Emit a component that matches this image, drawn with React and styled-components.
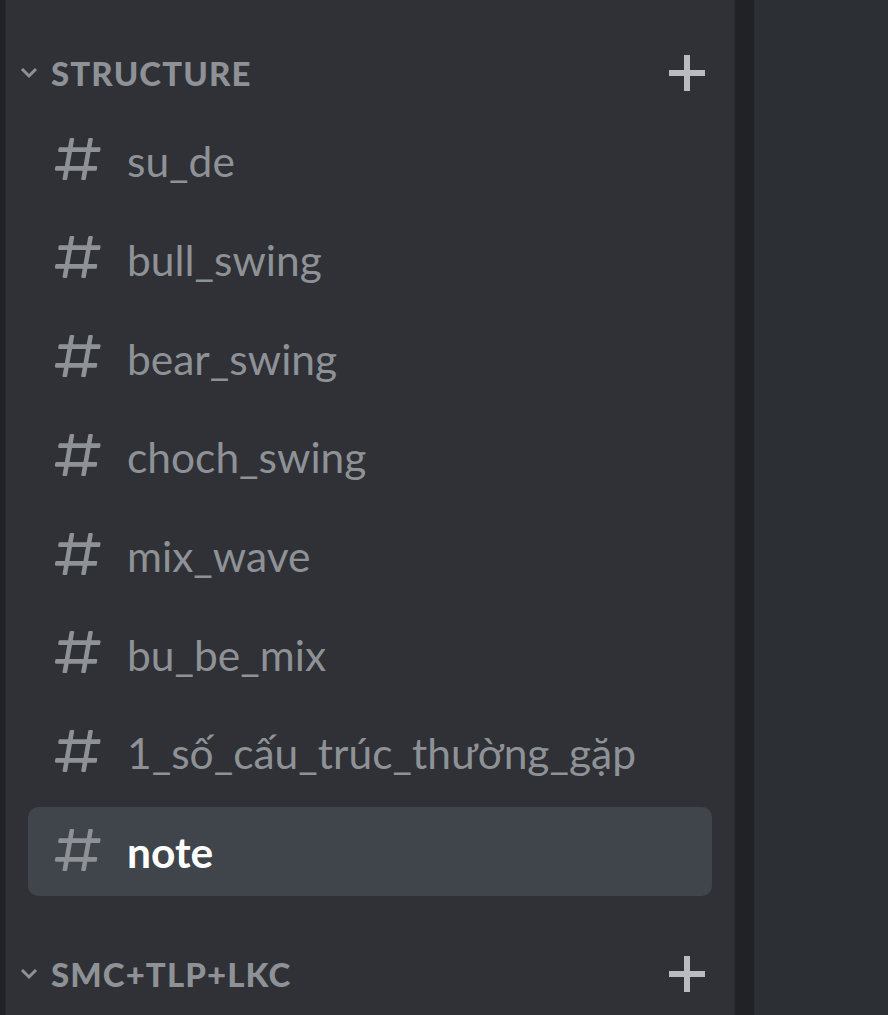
import React from "react";
import styled, { createGlobalStyle } from "styled-components";

const GlobalStyle = createGlobalStyle`
  html, body {
    margin: 0;
    padding: 0;
    background: #2c2f33;
    overflow: hidden;
  }
  #root {
    height: 1015px;
  }
`;

const channels = [
  "su_de",
  "bull_swing",
  "bear_swing",
  "choch_swing",
  "mix_wave",
  "bu_be_mix",
  "1_số_cấu_trúc_thường_gặp",
  "note",
];

const HashIcon = () => (
  <svg width="56" height="56" viewBox="0 0 24 24">
    <path
      fill="currentColor"
      fillRule="evenodd"
      d="M5.88657 21C5.57547 21 5.3399 20.7189 5.39427 20.4126L6.00001 17H2.59511C2.28449 17 2.04905 16.7198 2.10259 16.4138L2.27759 15.4138C2.31946 15.1746 2.52722 15 2.77011 15H6.35001L7.41001 9H4.00511C3.69449 9 3.45905 8.71977 3.51259 8.41381L3.68759 7.41381C3.72946 7.17456 3.93722 7 4.18011 7H7.76001L8.39677 3.41262C8.43914 3.17391 8.64664 3 8.88907 3H9.87344C10.1845 3 10.4201 3.28107 10.3657 3.58738L9.76001 7H15.76L16.3968 3.41262C16.4391 3.17391 16.6466 3 16.8891 3H17.8734C18.1845 3 18.4201 3.28107 18.3657 3.58738L17.76 7H21.1649C21.4755 7 21.711 7.28023 21.6574 7.58619L21.4824 8.58619C21.4406 8.82544 21.2328 9 20.9899 9H17.41L16.35 15H19.7549C20.0655 15 20.301 15.2802 20.2474 15.5862L20.0724 16.5862C20.0306 16.8254 19.8228 17 19.5799 17H16L15.3632 20.5874C15.3209 20.8261 15.1134 21 14.8709 21H13.8866C13.5755 21 13.3399 20.7189 13.3943 20.4126L14 17H8.00001L7.36325 20.5874C7.32088 20.8261 7.11337 21 6.87094 21H5.88657ZM9.41045 9L8.35045 15H14.3504L15.4104 9H9.41045Z"
    />
  </svg>
);

const Chevron = () => (
  <svg width="18" height="12" viewBox="0 0 18 12">
    <polyline
      points="2,2 9,9 16,2"
      fill="none"
      stroke="currentColor"
      strokeWidth="3"
    />
  </svg>
);

const PlusIcon = () => (
  <svg width="36" height="36" viewBox="0 0 36 36">
    <rect x="15" y="0" width="6" height="36" fill="currentColor" />
    <rect x="0" y="15" width="36" height="6" fill="currentColor" />
  </svg>
);

const App = () => {
  return (
    <>
      <GlobalStyle />
      <Layout>
        <Strip />
        <Sidebar>
          <Category>
            <Chevron />
            <CategoryName>Structure</CategoryName>
            <AddButton>
              <PlusIcon />
            </AddButton>
          </Category>
          <ChannelList>
            {channels.map((name) => (
              <Channel key={name} $active={name === "note"}>
                <HashWrap>
                  <HashIcon />
                </HashWrap>
                <ChannelName $active={name === "note"}>{name}</ChannelName>
              </Channel>
            ))}
          </ChannelList>
          <Category $spaced>
            <Chevron />
            <CategoryName>SMC+TLP+LKC</CategoryName>
            <AddButton>
              <PlusIcon />
            </AddButton>
          </Category>
        </Sidebar>
        <Divider />
        <Main />
      </Layout>
    </>
  );
};

const Layout = styled.div`
  display: flex;
  height: 1015px;
  font-family: Lato, "Noto Sans", sans-serif;
`;

const Strip = styled.div`
  width: 6px;
  background: #222327;
  border-right: 1px solid #28292d;
  box-sizing: border-box;
`;

const Sidebar = styled.nav`
  width: 728px;
  background: #2f3136;
  padding-top: 48px;
  box-sizing: border-box;
  overflow: hidden;
`;

const Category = styled.div`
  display: flex;
  align-items: center;
  height: 50px;
  margin-top: ${(p) => (p.$spaced ? "53px" : "0")};
  padding-left: 14px;
  padding-right: 29px;
  color: #8e9297;

  svg {
    flex-shrink: 0;
  }
`;

const CategoryName = styled.span`
  flex: 1;
  margin-left: 13px;
  font-size: 33px;
  font-weight: 900;
  text-transform: uppercase;
  letter-spacing: 1.1px;
  color: #8e9297;
`;

const AddButton = styled.span`
  display: flex;
  color: #b9bbbe;
`;

const ChannelList = styled.div`
  display: flex;
  flex-direction: column;
  gap: 9.2px;
  margin-top: 18px;
`;

const Channel = styled.div`
  display: flex;
  align-items: center;
  height: 89.5px;
  margin-left: 22px;
  width: 684px;
  padding-left: 22px;
  box-sizing: border-box;
  border-radius: 10px;
  background: ${(p) => (p.$active ? "#40444b" : "transparent")};
`;

const HashWrap = styled.span`
  display: flex;
  color: #8e9297;
  margin-top: -4px;
`;

const ChannelName = styled.span`
  margin-left: 21px;
  font-size: 42.5px;
  font-weight: ${(p) => (p.$active ? 700 : 400)};
  color: ${(p) => (p.$active ? "#ffffff" : "#8e9297")};
  white-space: nowrap;
`;

const Divider = styled.div`
  width: 21px;
  background: #202225;
  border-left: 1px solid #2a2c30;
  border-right: 1px solid #2a2c30;
  box-sizing: border-box;
`;

const Main = styled.main`
  flex: 1;
  background: #2c2f33;
`;

export default App;
